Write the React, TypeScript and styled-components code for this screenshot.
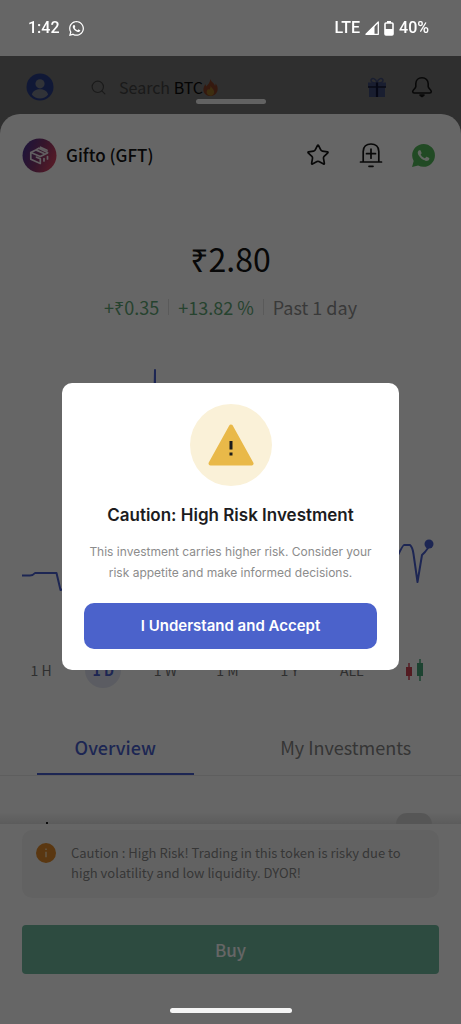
import React from "react";
import styled, { createGlobalStyle } from "styled-components";
import { FaWhatsapp } from "react-icons/fa";
import { Search, Star } from "lucide-react";

const appFont = '"Noto Sans CJK SC", "Noto Sans", sans-serif';
const modalFont = 'Inter, "Liberation Sans", sans-serif';
const accent = "#4a5fcf";

const GlobalStyle = createGlobalStyle`
  *, *::before, *::after { box-sizing: border-box; }
  body { margin: 0; background: #ffffff; font-family: ${appFont}; color: #141414; }
  button { font: inherit; color: inherit; border: 0; padding: 0; background: none; cursor: pointer; }
  h1, h2, p { margin: 0; font-weight: 400; }
  svg { display: block; }
`;

const Page = styled.div`
  min-height: 100vh;
  display: flex;
  flex-direction: column;
`;

const StatusBar = styled.header`
  position: relative;
  z-index: 3;
  height: 56px;
  padding: 0 32px 0 28px;
  display: flex;
  align-items: center;
  justify-content: space-between;
  color: #ffffff;
  font: 500 16px/24px Roboto, sans-serif;
`;

const StatusGroup = styled.div<{ $gap: number }>`
  display: flex;
  align-items: center;
  gap: ${(p) => p.$gap}px;
`;

const HomeBar = styled.div`
  position: relative;
  height: 58px;
  padding: 4px 28px 0 26px;
  display: flex;
  align-items: center;
  background: #757575;
`;

const SearchButton = styled.button`
  flex: 1;
  display: flex;
  align-items: center;
  margin-left: 36px;
  font-size: 16px;
  line-height: 24px;
  color: #424242;
  svg { flex: none; }
`;

const SearchText = styled.span`
  margin-left: 12px;
  b { font-weight: 400; color: #0a0a0a; }
`;

const HomeActions = styled.div`
  display: flex;
  align-items: center;
  gap: 24px;
`;

const Handle = styled.span`
  position: absolute;
  left: 50%;
  bottom: 10px;
  width: 70px;
  height: 5px;
  margin-left: -35px;
  border-radius: 3px;
  background: #f5f5f5;
`;

const SheetBack = styled.div`
  flex: 1;
  display: flex;
  background: linear-gradient(#757575 40px, #ffffff 40px);
`;

const Sheet = styled.main`
  flex: 1;
  min-width: 0;
  display: flex;
  flex-direction: column;
  border-radius: 20px 20px 0 0;
  background: #ffffff;
`;

const CoinBar = styled.div`
  display: flex;
  align-items: center;
  padding: 23px 26px 0 22px;
`;

const CoinName = styled.h1`
  flex: 1;
  margin-left: 9px;
  font-size: 17px;
  line-height: 36px;
  font-weight: 500;
`;

const CoinActions = styled.div`
  display: flex;
  align-items: center;
  gap: 29px;
`;

const Price = styled.p`
  margin-top: 61px;
  text-align: center;
  font-size: 32px;
  line-height: 48px;
`;

const ChangeRow = styled.div`
  display: flex;
  justify-content: center;
  align-items: center;
  margin-top: 17px;
  font-size: 18px;
  line-height: 28px;
`;

const ChangeItem = styled.span<{ $muted?: boolean }>`
  padding: 0 9px;
  line-height: 16px;
  color: ${(p) => (p.$muted ? "#8f8f8f" : "#5fa777")};
  & + & { border-left: 1px solid #e2e2e2; }
`;

const Chart = styled.svg`
  width: 100%;
  height: auto;
  margin-top: 45px;
`;

const Ranges = styled.div`
  display: grid;
  grid-template-columns: repeat(7, 1fr);
  justify-items: center;
  align-items: center;
  padding: 0 16px 0 10px;
  margin-top: 42px;
`;

const RangeButton = styled.button<{ $active?: boolean }>`
  width: 36px;
  height: 36px;
  display: grid;
  place-items: center;
  border-radius: 50%;
  white-space: nowrap;
  font-size: 14px;
  line-height: 20px;
  font-weight: ${(p) => (p.$active ? 700 : 400)};
  color: ${(p) => (p.$active ? accent : "#777777")};
  background: ${(p) => (p.$active ? "#e4e7f4" : "none")};
`;

const Tabs = styled.div`
  display: grid;
  grid-template-columns: 1fr 1fr;
  margin-top: 41px;
  border-bottom: 1px solid #ececec;
`;

const Tab = styled.button<{ $active?: boolean }>`
  margin: 0 37px;
  padding: 4px 0 12px;
  white-space: nowrap;
  font-size: 18px;
  line-height: 28px;
  font-weight: ${(p) => (p.$active ? 500 : 400)};
  color: ${(p) => (p.$active ? accent : "#858585")};
  border-bottom: 2px solid ${(p) => (p.$active ? accent : "transparent")};
`;

const Peek = styled.section`
  flex: 1 0 44px;
  overflow: hidden;
  display: flex;
  align-items: flex-end;
  justify-content: space-between;
  padding: 0 29px 0 46px;
  background: linear-gradient(to top, #e6e6e6, #ffffff 12px);
`;

const Speck = styled.span`
  width: 2px;
  height: 2px;
  background: #222222;
`;

const PeekCircle = styled.span`
  width: 36px;
  height: 11px;
  border-radius: 18px 18px 0 0;
  background: #d8d8d8;
`;

const Footer = styled.footer`
  padding: 6px 22px 50px;
`;

const Notice = styled.div`
  display: flex;
  gap: 15px;
  min-height: 68px;
  padding: 13px 14px;
  border-radius: 10px;
  background: #f6f6f6;
  color: #8a8a8a;
  font-size: 13px;
  line-height: 20px;
  svg { flex: none; }
`;

const BuyButton = styled.button`
  display: block;
  width: 100%;
  height: 49px;
  margin-top: 27px;
  border-radius: 4px;
  background: #70bba0;
  color: #ffffff;
  font-size: 17px;
  line-height: 28px;
  font-weight: 500;
`;

const Backdrop = styled.div`
  position: fixed;
  inset: 0;
  z-index: 2;
  display: flex;
  align-items: center;
  justify-content: center;
  padding: 28px 62px 0;
  background: rgba(0, 0, 0, 0.6);
`;

const Modal = styled.div`
  width: 100%;
  max-width: 400px;
  padding: 21px 22px;
  display: flex;
  flex-direction: column;
  align-items: center;
  border-radius: 10px;
  background: #ffffff;
  font-family: ${modalFont};
  text-align: center;
`;

const WarnCircle = styled.div`
  width: 82px;
  height: 82px;
  display: grid;
  place-items: center;
  border-radius: 50%;
  background: #faf1d8;
`;

const ModalTitle = styled.h2`
  margin-top: 17px;
  font-size: 17px;
  line-height: 24px;
  font-weight: 600;
  color: #1c1c1e;
`;

const ModalText = styled.p`
  margin-top: 14px;
  font-size: 12px;
  line-height: 21px;
  color: #8c8c8c;
`;

const AcceptButton = styled.button`
  width: 100%;
  height: 46px;
  margin-top: 20px;
  border-radius: 10px;
  background: #4b62cb;
  color: #ffffff;
  font-size: 15px;
  line-height: 20px;
  font-weight: 600;
`;

const HomeIndicator = styled.div`
  position: fixed;
  z-index: 3;
  left: 50%;
  bottom: 11px;
  width: 122px;
  height: 5px;
  margin-left: -61px;
  border-radius: 3px;
  background: #f5f5f5;
`;

const SignalIcon = () => (
  <svg width="14" height="14" viewBox="0 0 14 14" aria-hidden="true">
    <path d="M13.3 1v12.300H1z" fill="none" stroke="#fff" strokeWidth="1.3" strokeLinejoin="round" />
    <path d="M9.500 4.500v9H.6z" fill="#fff" />
  </svg>
);

const BatteryIcon = () => (
  <svg width="10" height="15" viewBox="0 0 10 15" aria-hidden="true">
    <path d="M3 0h4v2H3z" fill="#fff" />
    <rect x="1" y="2" width="8" height="12" rx="1" fill="none" stroke="#fff" strokeWidth="1.6" />
    <path d="M1 8h8v6H1z" fill="#fff" />
  </svg>
);

const AvatarIcon = () => (
  <svg width="28" height="28" viewBox="0 0 28 28" aria-hidden="true">
    <circle cx="14" cy="14" r="13.500" fill="#293c88" />
    <circle cx="14" cy="10.800" r="4.600" fill="#7b7f8c" />
    <path d="M5.800 21.600c1.200-4 4.300-5.400 8.200-5.400s7 1.400 8.200 5.400c-2 2.700-5 4-8.200 4s-6.200-1.300-8.200-4z" fill="#7b7f8c" />
  </svg>
);

const FlameIcon = () => (
  <svg width="15" height="17" viewBox="0 0 15 17" aria-hidden="true">
    <path d="M7.400 0c.6 3 4 4 4.600 7 .5-.6.7-1.500.6-2.400 1.600 1.800 2.400 4 2 6.400-.5 3.400-3.400 6-7 6S.8 14.700.4 11.400C.1 8.700 1.500 6.900 2.300 5.300c.5.700.7 1.500.8 2.300C5.200 5.700 6.800 3.500 7.400 0z" fill="#854026" />
    <path d="M7.700 6.500c.2 2 2.900 3.200 3.400 5.800.4 2.500-1.300 4.500-3.600 4.500s-4.100-1.900-3.800-4.200c.2-1.400 1-2 1.500-2.900.4.5.6 1 .7 1.500 1-1.200 1.800-2.700 1.800-4.700z" fill="#9a7428" />
  </svg>
);

const GiftIcon = () => (
  <svg width="20" height="20" viewBox="0 0 20 20" aria-hidden="true">
    <path d="M10 6C5 6 3.500 4.500 4.200 2.600 5 .6 8.500 1 10 5.500 11.500 1 15 .6 15.800 2.600 16.500 4.500 15 6 10 6z" fill="none" stroke="#404b78" strokeWidth="1.5" />
    <path d="M1 5.500h18v4.200H1zM2 10.500h16V20H2z" fill="#404b78" />
    <path d="M8.900 5.500h2.200V20H8.900zM1 9.300h18v1.500H1z" fill="#101635" />
  </svg>
);

const BellIcon = () => (
  <svg width="22" height="22" viewBox="0 0 22 22" fill="none" stroke="#141414" strokeWidth="1.6" strokeLinejoin="round" aria-hidden="true">
    <path d="M11 1.800c-3.800 0-6.200 2.600-6.200 6v2.700c0 1.900-3.100 3.100-3.100 5.100 0 .9.700 1.400 1.600 1.400h15.400c.9 0 1.600-.5 1.600-1.400 0-2-3.100-3.200-3.100-5.100V7.800c0-3.400-2.400-6-6.200-6z" />
    <path d="M9 19h4l-2 1.500z" fill="#141414" />
  </svg>
);

const AlertBellIcon = () => (
  <svg width="24" height="26" viewBox="0 0 24 26" fill="none" stroke="#141414" strokeWidth="1.7" strokeLinecap="round" aria-hidden="true">
    <path d="M4.200 20V9.500C4.200 4.800 7.500 2 12 2s7.800 2.800 7.800 7.500V20M1.500 20h21M10 24.300h4M12 7.200v9M7.500 11.700h9" />
  </svg>
);

const WhatsAppBadge = () => (
  <svg width="23" height="23" viewBox="0 0 24 24" aria-hidden="true">
    <path d="M.057 24l1.687-6.163A11.867 11.867 0 0 1 .16 11.892C.16 5.335 5.495 0 12.050 0a11.900 11.900 0 0 1 11.890 11.900c0 6.550-5.340 11.890-11.890 11.890a11.900 11.900 0 0 1-5.690-1.450z" fill="#54b95a" />
    <path d="M17.472 14.382c-.297-.149-1.758-.867-2.030-.967-.273-.099-.471-.148-.67.15-.197.297-.767.966-.94 1.164-.173.199-.347.223-.644.075-.297-.15-1.255-.463-2.390-1.475-.883-.788-1.480-1.761-1.653-2.059-.173-.297-.018-.458.13-.606.134-.133.298-.347.446-.52.149-.174.198-.298.298-.497.099-.198.05-.371-.025-.52-.075-.149-.669-1.612-.916-2.207-.242-.579-.487-.5-.669-.51-.173-.008-.371-.01-.57-.01-.198 0-.52.074-.792.372-.272.297-1.040 1.016-1.040 2.479 0 1.462 1.065 2.875 1.213 3.074.149.198 2.096 3.200 5.077 4.487.709.306 1.262.489 1.694.625.712.227 1.360.195 1.871.118.571-.085 1.758-.719 2.006-1.413.248-.694.248-1.289.173-1.413-.074-.124-.272-.198-.57-.347" fill="#f4fff4" />
  </svg>
);

const CoinLogo = () => (
  <svg width="35" height="35" viewBox="0 0 35 35" aria-hidden="true">
    <defs>
      <linearGradient id="coin" x1="0" y1="0.3" x2="1" y2="0.7">
        <stop offset="0" stopColor="#4a3290" />
        <stop offset="0.5" stopColor="#86366c" />
        <stop offset="1" stopColor="#dc4560" />
      </linearGradient>
    </defs>
    <circle cx="17.5" cy="17.5" r="17" fill="url(#coin)" />
    <g fill="none" stroke="#f2ecf2" strokeWidth="1.7" strokeLinejoin="round" strokeLinecap="round">
      <path d="M14.500 19.200l3.800 1.600v4.700l-9.500-4.300v-6.700l9.500 4 7.200-3.600" />
      <path d="M8.800 14.500l5-2.600 8.200 3.600M13.800 11.900l3-1.700 8.700 4.200M18.500 9.200l6.500 3.100" />
      <path d="M22 20.500v2.400M25.500 18.500v2.400" />
    </g>
  </svg>
);

const CandleIcon = () => (
  <svg width="20" height="22" viewBox="0 0 20 22" aria-hidden="true">
    <path d="M5 4v17" stroke="#cf4454" strokeWidth="1.5" />
    <rect x="2" y="8" width="6" height="9" fill="#cf4454" />
    <path d="M16 0v22" stroke="#4aa97a" strokeWidth="1.5" />
    <rect x="13" y="4" width="6" height="13" fill="#4aa97a" />
  </svg>
);

const InfoIcon = () => (
  <svg width="20" height="20" viewBox="0 0 20 20" aria-hidden="true">
    <circle cx="10" cy="10" r="10" fill="#e08a2b" />
    <path d="M10 8.800v5.400M10 5.400v1.600" stroke="#f4d9b0" strokeWidth="1.5" />
  </svg>
);

const WarnIcon = () => (
  <svg width="46" height="42" viewBox="0 0 46 42" aria-hidden="true">
    <path d="M23 2.500 43.500 39.500h-41z" fill="#e9b949" stroke="#e9b949" strokeWidth="4" strokeLinejoin="round" />
    <path d="M21.500 17h3v8.500h-3zM21.500 28.500h3v3h-3z" fill="#1c1c1c" />
  </svg>
);

const ranges = ["1 H", "1 D", "1 W", "1 M", "1 Y", "ALL"];

export default function App() {
  return (
    <>
      <GlobalStyle />
      <Page>
        <StatusBar>
          <StatusGroup $gap={8}>
            <span>1:42</span>
            <FaWhatsapp size={17} />
          </StatusGroup>
          <StatusGroup $gap={5}>
            <span>LTE</span>
            <SignalIcon />
            <StatusGroup $gap={5}>
              <BatteryIcon />
              <span>40%</span>
            </StatusGroup>
          </StatusGroup>
        </StatusBar>

        <HomeBar>
          <button aria-label="Profile"><AvatarIcon /></button>
          <SearchButton>
            <Search size={17} strokeWidth={1.6} />
            <SearchText>Search <b>BTC</b></SearchText>
            <FlameIcon />
          </SearchButton>
          <HomeActions>
            <button aria-label="Rewards"><GiftIcon /></button>
            <button aria-label="Notifications"><BellIcon /></button>
          </HomeActions>
          <Handle />
        </HomeBar>

        <SheetBack>
          <Sheet>
            <CoinBar>
              <CoinLogo />
              <CoinName>Gifto (GFT)</CoinName>
              <CoinActions>
                <button aria-label="Add to watchlist"><Star size={24} strokeWidth={1.7} /></button>
                <button aria-label="Set price alert"><AlertBellIcon /></button>
                <button aria-label="Share on WhatsApp"><WhatsAppBadge /></button>
              </CoinActions>
            </CoinBar>

            <Price>₹2.80</Price>
            <ChangeRow>
              <ChangeItem>+₹0.35</ChangeItem>
              <ChangeItem>+13.82 %</ChangeItem>
              <ChangeItem $muted>Past 1 day</ChangeItem>
            </ChangeRow>

            <Chart viewBox="0 0 461 250" role="img" aria-label="Price over the past day">
              <path
                d="M22 215.500h8q3 0 5-2.500h21.500l4 17 20-6 22-10 20 8 16-4 12 3 4.500-211v212l26-8 30 7 34-11 40 9 36-14 40 8 37-18q5-10 6-10h6q2.500 2 3.500 9l4 28 4.500-27 3-3 6-8"
                fill="none"
                stroke={accent}
                strokeWidth="2"
                strokeLinejoin="round"
              />
              <circle cx="429" cy="184" r="4.5" fill={accent} />
            </Chart>

            <Ranges>
              {ranges.map((r) => (
                <RangeButton key={r} $active={r === "1 D"}>{r}</RangeButton>
              ))}
              <RangeButton aria-label="Candlestick chart"><CandleIcon /></RangeButton>
            </Ranges>

            <Tabs role="tablist">
              <Tab role="tab" aria-selected="true" $active>Overview</Tab>
              <Tab role="tab" aria-selected="false">My Investments</Tab>
            </Tabs>

            <Peek>
              <Speck />
              <PeekCircle />
            </Peek>

            <Footer>
              <Notice>
                <InfoIcon />
                <p>Caution : High Risk! Trading in this token is risky due to high volatility and low liquidity. DYOR!</p>
              </Notice>
              <BuyButton>Buy</BuyButton>
            </Footer>
          </Sheet>
        </SheetBack>
      </Page>

      <Backdrop>
        <Modal role="dialog" aria-modal="true" aria-labelledby="risk-title">
          <WarnCircle><WarnIcon /></WarnCircle>
          <ModalTitle id="risk-title">Caution: High Risk Investment</ModalTitle>
          <ModalText>This investment carries higher risk. Consider your risk appetite and make informed decisions.</ModalText>
          <AcceptButton>I Understand and Accept</AcceptButton>
        </Modal>
      </Backdrop>
      <HomeIndicator />
    </>
  );
}
